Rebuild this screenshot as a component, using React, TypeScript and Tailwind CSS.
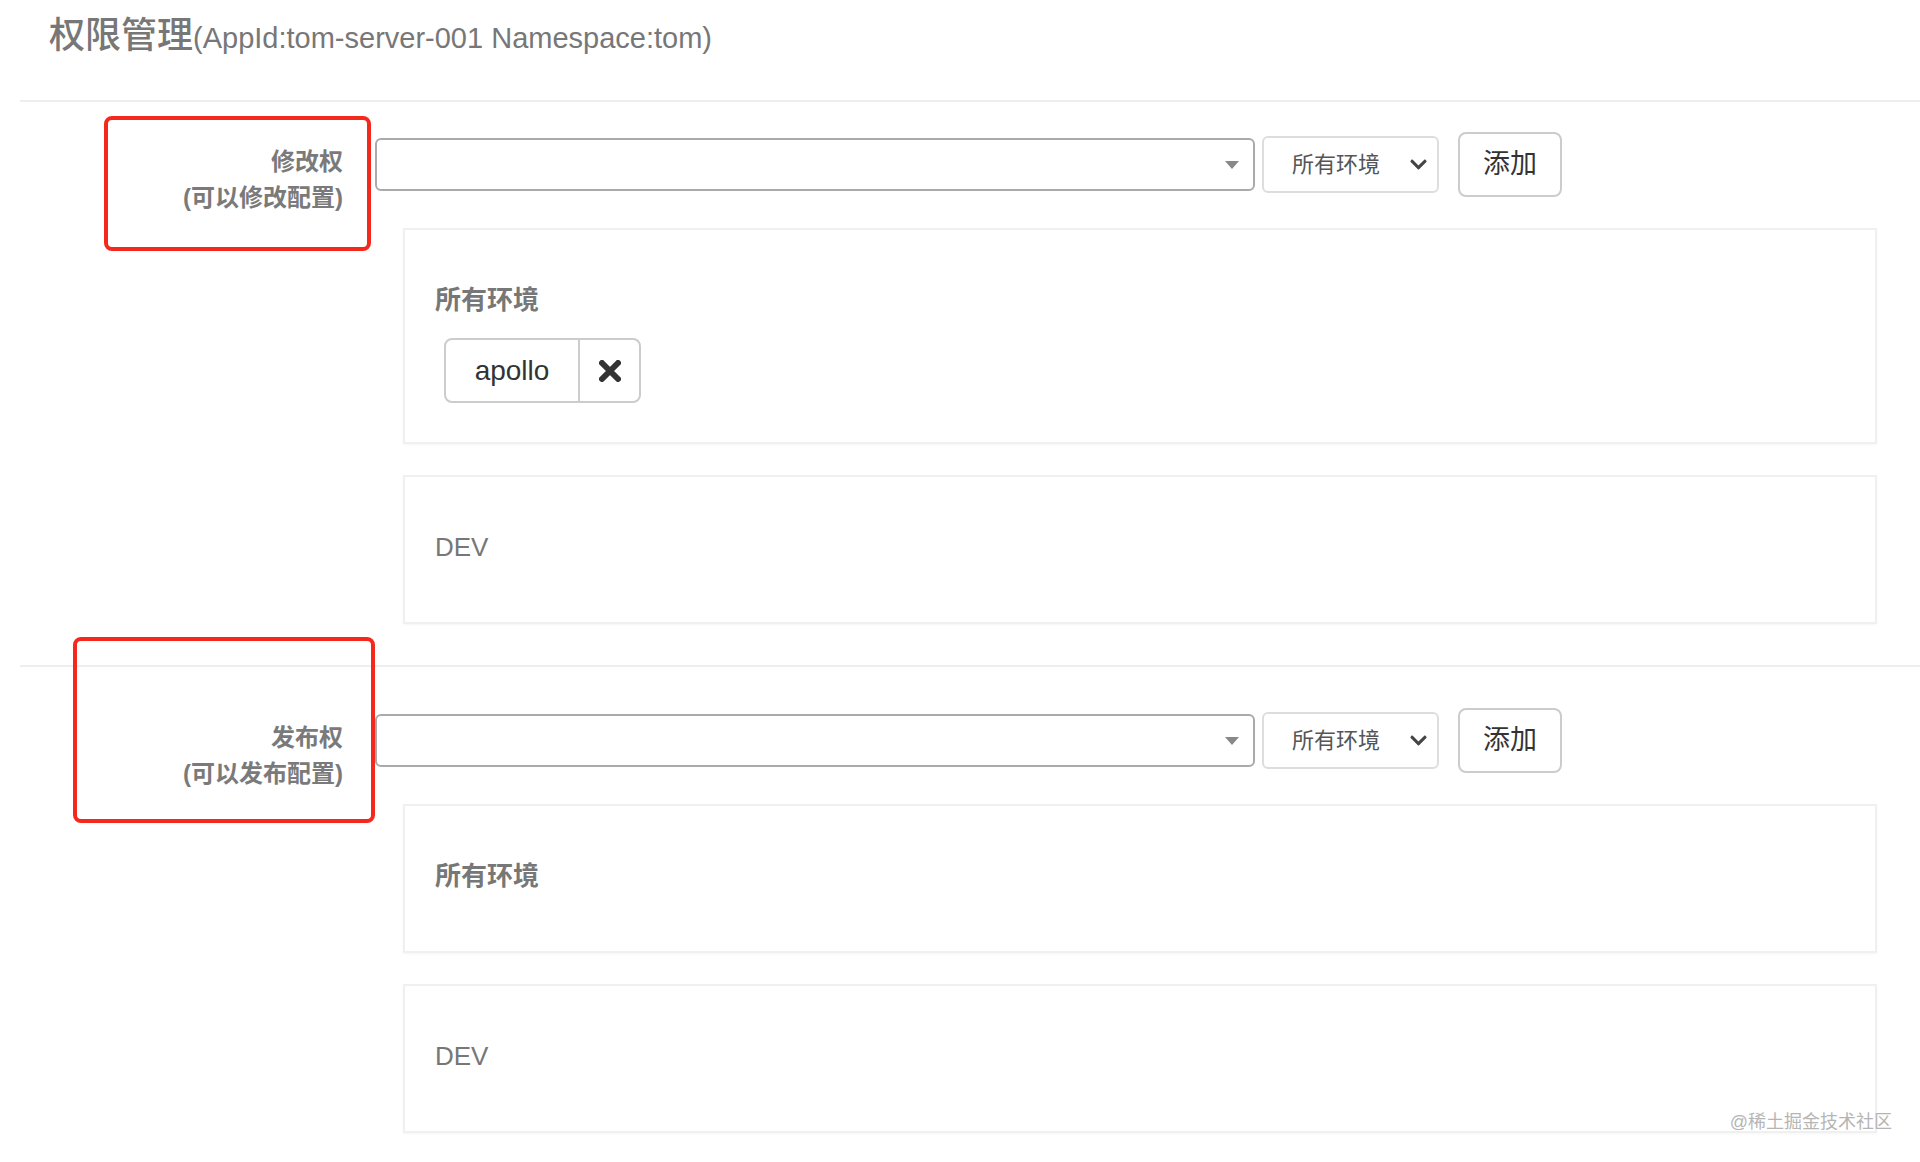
import React from 'react';
import { FaChevronDown } from 'react-icons/fa';

type Scope = {
  title: string;
  bold?: boolean;
  users?: string[];
};

type Section = {
  name: string;
  hint: string;
  scopes: Scope[];
};

const sections: Section[] = [
  {
    name: '修改权',
    hint: '(可以修改配置)',
    scopes: [
      { title: '所有环境', bold: true, users: ['apollo'] },
      { title: 'DEV' },
    ],
  },
  {
    name: '发布权',
    hint: '(可以发布配置)',
    scopes: [{ title: '所有环境', bold: true }, { title: 'DEV' }],
  },
];

// heavy "remove" cross used on user tags
function RemoveIcon() {
  return (
    <svg width="22" height="22" viewBox="0 0 22 22">
      <path d="M3 3 L19 19 M19 3 L3 19" stroke="#333" strokeWidth="6" strokeLinecap="round" />
    </svg>
  );
}

function ScopeCard({ scope }: { scope: Scope }) {
  const hasUsers = !!scope.users && scope.users.length > 0;
  return (
    <div
      className={
        'ml-[28px] mt-[31px] border-2 border-[#f0f0f0] bg-white pl-[30px] pt-[48px] shadow-[0_1px_2px_rgba(0,0,0,0.04)] ' +
        (hasUsers ? 'pb-[39px]' : 'pb-[53px]')
      }
    >
      <div
        className={
          'h-[44px] flex items-center text-[26px] text-[#777] ' +
          (scope.bold ? 'font-bold' : 'font-normal')
        }
      >
        {scope.title}
      </div>
      {hasUsers && (
        <div className="mt-[16px] ml-[9px] flex gap-3">
          {scope.users!.map((u) => (
            <div key={u} className="flex h-[65px] border-2 border-[#cccccc] rounded-[8px] overflow-hidden">
              <span className="w-[132px] flex items-center justify-center text-[28px] text-[#333]">{u}</span>
              <span className="w-[61px] border-l-2 border-[#cccccc] flex items-center justify-center">
                <RemoveIcon />
              </span>
            </div>
          ))}
        </div>
      )}
    </div>
  );
}

function PermissionSection({ section, index }: { section: Section; index: number }) {
  return (
    <section className={'relative flex ' + (index === 0 ? 'pt-[30px] pb-[41px]' : 'pt-[41px] pb-[29px]')}>
      {/* red annotation frame around the label */}
      {index === 0 ? (
        <div className="absolute left-[84px] top-[14px] w-[267px] h-[135px] border-4 border-[#f5281c] rounded-[8px] pointer-events-none" />
      ) : (
        <div className="absolute left-[53px] top-[-30px] w-[302px] h-[186px] border-4 border-[#f5281c] rounded-[8px] pointer-events-none" />
      )}

      <div className="w-[355px] shrink-0 pr-[32px] pt-[12px] text-right text-[24px] font-bold text-[#7a7a7a] leading-[36px]">
        <div>{section.name}</div>
        <div>{section.hint}</div>
      </div>

      <div className="flex-1 pr-[43px]">
        <div className="flex items-center h-[65px]">
          <div className="w-[880px] h-[53px] border-2 border-[#aaaaaa] rounded-[6px] flex items-center justify-end pr-[14px]">
            <svg width="14" height="8" viewBox="0 0 14 8">
              <path d="M0 0 L14 0 L7 8 Z" fill="#888" />
            </svg>
          </div>
          <div className="ml-[7px] w-[177px] h-[57px] border-2 border-[#dddddd] rounded-[6px] flex items-center pl-[28px] pr-[9px] text-[22px] text-[#555]">
            <span className="flex-1">所有环境</span>
            <FaChevronDown size={19} className="text-[#444]" />
          </div>
          <button className="ml-[19px] w-[104px] h-[65px] border-2 border-[#cccccc] rounded-[8px] text-[27px] text-[#333] bg-white">
            添加
          </button>
        </div>
        {section.scopes.map((s, i) => (
          <ScopeCard key={i} scope={s} />
        ))}
      </div>
    </section>
  );
}

export default function App() {
  return (
    <div className="relative min-h-[1162px] bg-white font-['Liberation_Sans','Noto_Sans_CJK_SC',sans-serif] overflow-hidden">
      <div className="h-[100px] pl-[49px] pt-[14px]">
        <h1 className="flex items-baseline text-[#777] leading-[44px]">
          <span className="text-[36px] font-medium">权限管理</span>
          <span className="text-[29px] font-normal">(AppId:tom-server-001 Namespace:tom)</span>
        </h1>
      </div>
      <div className="ml-[20px]">
        {sections.map((s, i) => (
          <div key={s.name} className="border-t-2 border-[#eeeeee]">
            <PermissionSection section={s} index={i} />
          </div>
        ))}
      </div>
      <div className="absolute right-[28px] top-[1109px] text-[18px] text-[#b5b5b5] leading-[26px]">
        @稀土掘金技术社区
      </div>
    </div>
  );
}
